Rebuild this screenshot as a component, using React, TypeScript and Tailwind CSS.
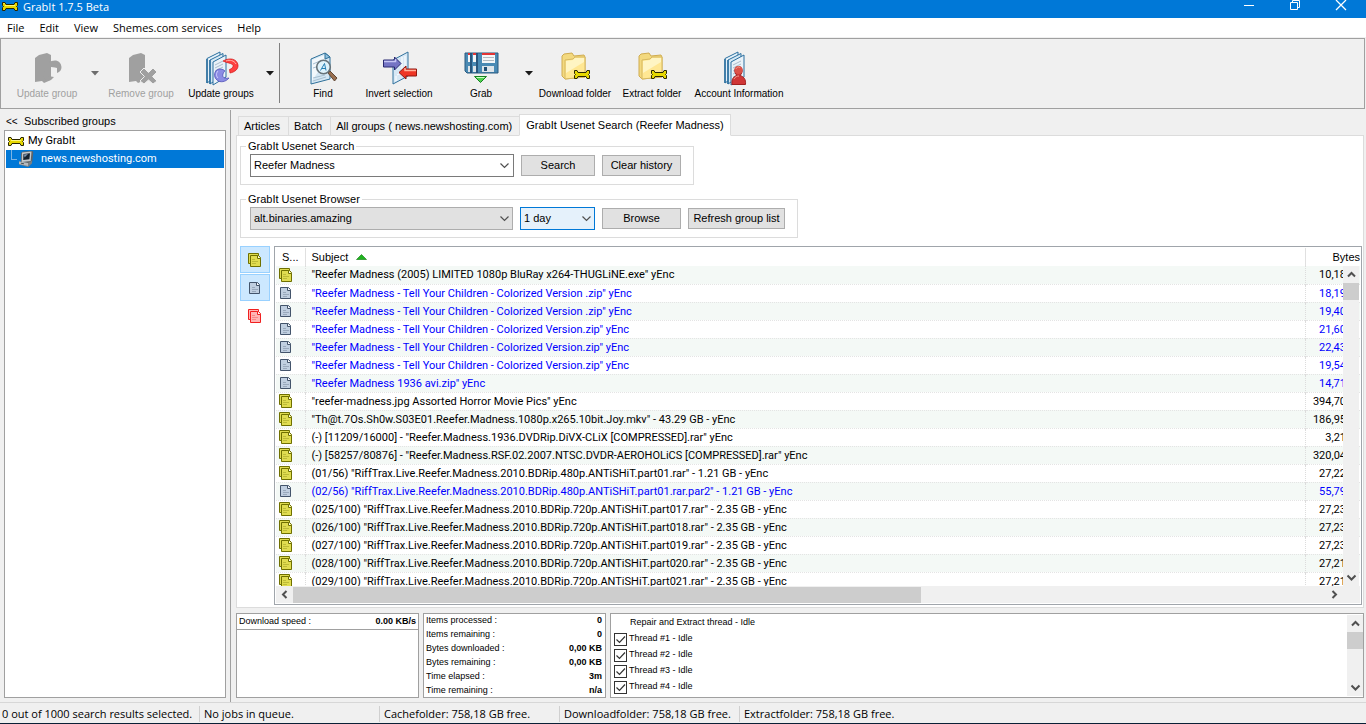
import { useState, type ReactNode } from 'react';

interface Article {
  subject: string;
  bytes: string;
  partial?: boolean;
}

const ARTICLES: Article[] = [
  { subject: '"Reefer Madness (2005) LIMITED 1080p BluRay x264-THUGLiNE.exe" yEnc', bytes: '10,18' },
  { subject: '"Reefer Madness - Tell Your Children - Colorized Version .zip" yEnc', bytes: '18,19', partial: true },
  { subject: '"Reefer Madness - Tell Your Children - Colorized Version .zip" yEnc', bytes: '19,40', partial: true },
  { subject: '"Reefer Madness - Tell Your Children - Colorized Version.zip" yEnc', bytes: '21,60', partial: true },
  { subject: '"Reefer Madness - Tell Your Children - Colorized Version.zip" yEnc', bytes: '22,43', partial: true },
  { subject: '"Reefer Madness - Tell Your Children - Colorized Version.zip" yEnc', bytes: '19,54', partial: true },
  { subject: '"Reefer Madness 1936 avi.zip" yEnc', bytes: '14,71', partial: true },
  { subject: '"reefer-madness.jpg Assorted Horror Movie Pics" yEnc', bytes: '394,70' },
  { subject: '"Th@t.7Os.Sh0w.S03E01.Reefer.Madness.1080p.x265.10bit.Joy.mkv" - 43.29 GB - yEnc', bytes: '186,95' },
  { subject: '(-) [11209/16000] - "Reefer.Madness.1936.DVDRip.DiVX-CLiX [COMPRESSED].rar" yEnc', bytes: '3,21' },
  { subject: '(-) [58257/80876] - "Reefer.Madness.RSF.02.2007.NTSC.DVDR-AEROHOLiCS [COMPRESSED].rar" yEnc', bytes: '320,04' },
  { subject: '(01/56) "RiffTrax.Live.Reefer.Madness.2010.BDRip.480p.ANTiSHiT.part01.rar" - 1.21 GB - yEnc', bytes: '27,22' },
  { subject: '(02/56) "RiffTrax.Live.Reefer.Madness.2010.BDRip.480p.ANTiSHiT.part01.rar.par2" - 1.21 GB - yEnc', bytes: '55,79', partial: true },
  { subject: '(025/100) "RiffTrax.Live.Reefer.Madness.2010.BDRip.720p.ANTiSHiT.part017.rar" - 2.35 GB - yEnc', bytes: '27,23' },
  { subject: '(026/100) "RiffTrax.Live.Reefer.Madness.2010.BDRip.720p.ANTiSHiT.part018.rar" - 2.35 GB - yEnc', bytes: '27,23' },
  { subject: '(027/100) "RiffTrax.Live.Reefer.Madness.2010.BDRip.720p.ANTiSHiT.part019.rar" - 2.35 GB - yEnc', bytes: '27,23' },
  { subject: '(028/100) "RiffTrax.Live.Reefer.Madness.2010.BDRip.720p.ANTiSHiT.part020.rar" - 2.35 GB - yEnc', bytes: '27,21' },
  { subject: '(029/100) "RiffTrax.Live.Reefer.Madness.2010.BDRip.720p.ANTiSHiT.part021.rar" - 2.35 GB - yEnc', bytes: '27,21' },
];

const STATS = [
  ['Items processed :', '0'],
  ['Items remaining :', '0'],
  ['Bytes downloaded :', '0,00 KB'],
  ['Bytes remaining :', '0,00 KB'],
  ['Time elapsed :', '3m'],
  ['Time remaining :', 'n/a'],
];

const THREADS = ['Thread #1 - Idle', 'Thread #2 - Idle', 'Thread #3 - Idle', 'Thread #4 - Idle'];

const TABS = ['Articles', 'Batch', 'All groups ( news.newshosting.com)', 'GrabIt Usenet Search (Reefer Madness)'];

/* ---------- icons ---------- */

const BONE = 'M.5 .5h2.500l1 2h8l1-2h2.500v3l-1 1 1 1v3H13l-1-2H4l-1 2H.5v-3l1-1-1-1z';

function BoneIcon({ className }: { className?: string }) {
  return (
    <svg className={className} width="16" height="9" viewBox="0 0 16 9">
      <path d={BONE} fill="#e8d800" stroke="#2a2600" />
      <path d="M1.500 1.500h1M3 3.500h10" stroke="#fff67a" />
    </svg>
  );
}

function ServerIcon() {
  return (
    <svg width="16" height="16" viewBox="0 0 16 16">
      <path d="M3 2l2-1.500 9.500-.5.8 1.500-1 9L11 13l-8-2z" fill="#5d6368" />
      <path d="M4 1.500l9.500-1-.8 9.500-9 1z" fill="#c3c8cb" />
      <path d="M5.500 3l6.500-.7-.6 6-6.200.7z" fill="#16222f" />
      <path d="M6 3.500l4-.4-3.500 3.400z" fill="#7c96b3" />
      <path d="M1 10.500l9 1.500 4-2.500v3L10 16l-9-2.500z" fill="#777e83" />
      <path d="M1 10.500l9 1.500v3l-9-2z" fill="#b3b9bd" />
      <path d="M3 12.200l3 .6" stroke="#4a5055" />
    </svg>
  );
}

function Stack({ dim }: { dim?: boolean }) {
  if (dim) return <path d="M6 7l4-3 8-2 4 2v25l-7 3-2-2-7 1z" fill="#a0a0a0" />;
  return (
    <g stroke="#2b6f9f" strokeLinejoin="round">
      <path d="M4 7.500L17 1v22L4 32z" fill="#e6f2fa" />
      <path d="M7 9l13-6.500v22L7 33z" fill="#d5e8f4" />
      <path d="M10 11l13-7v22L10 34z" fill="#e9f1f8" />
      <path d="M12 14l8-4M12 17l8-4M12 20l8-4M12 23l6-3M12 26l5-2" stroke="#a9bccb" />
      <path d="M4 8v24M7 9v24" strokeWidth="1.500" />
    </g>
  );
}

function Page() {
  return (
    <g strokeLinejoin="round">
      <path d="M6 8L20 2l5 4v22L6 33z" fill="#d4e7f4" stroke="#2f7099" />
      <path d="M7 9l13-5v6L7 30z" fill="#f2f8fc" />
      <path d="M20 2v6l5-2z" fill="#8fc1df" stroke="#2f7099" />
      <path d="M8 13l7-3M8 17l6-2M8 27l12-3M8 30l13-4" stroke="#a7bfd0" />
    </g>
  );
}

function UpdateGroupsIcon() {
  return (
    <>
      <Stack />
      <path d="M20 10c7-4 14-2 15 4 .5 4-3 7-8 8l-.5-3.500c3-1 4.500-3.500 3-5-2-1.500-5.500-1.500-9.500-3.500z" fill="#ff4040" stroke="#d01414" strokeWidth=".7" />
      <path d="M23 10c4-1.500 8-.5 10 3" stroke="#ffb2a8" fill="none" />
      <path d="M16 18c-5 1-6 8-2 11 3 3 9 2 12-2-5 1-7-1-6-4 .5-2 2-3 2-3-2-2-4-2-6-2z" fill="#8b8ce4" stroke="#4545b0" strokeWidth=".7" />
      <path d="M15 20c-2 2-2 5 0 7" stroke="#d5d4ff" fill="none" />
    </>
  );
}

function FindIcon() {
  return (
    <>
      <Page />
      <path d="M23 22l2-2 7 7-2.500 3z" fill="#9a6f4f" stroke="#5e4634" />
      <circle cx="18.500" cy="16" r="6.800" fill="#dff3fc" stroke="#66737a" strokeWidth="1.600" />
      <path d="M15.500 19.500l4-7 1.500 7M17 17.500h4" stroke="#247fb4" fill="none" />
    </>
  );
}

function InvertIcon() {
  return (
    <>
      <path d="M12 9l15-8v24l-15 8z" fill="#d7e8f5" stroke="#32729d" />
      <path d="M15 25v5M21 6v18M24 5v17M16 24l4-2" stroke="#fff" />
      <path d="M2.500 9h11V6l6.500 6.500-6.500 6.500V16h-11z" fill="#7474c4" stroke="#292970" />
      <path d="M3 10.500h11.500V8" stroke="#c6c6f5" fill="none" strokeWidth="1.500" />
      <path d="M35.500 18H25v-3l-7 6.500 7 6.500v-3h10.500z" fill="#ee3524" stroke="#8e170f" />
      <path d="M35 19.500H24V17" stroke="#ffb39b" fill="none" strokeWidth="1.500" />
    </>
  );
}

function GrabIcon() {
  return (
    <>
      <path d="M2 2h33v20H4l-2-2z" fill="#4a8ab4" stroke="#285a80" />
      <path d="M8 2v20M14 2v20" stroke="#1c466b" strokeWidth="1.500" />
      <path d="M5 2h2v9H5zM10 2h3v9h-3zM19 2h13v10H19z" fill="#f4f6f8" />
      <path d="M5 2h2v2H5zM10 2h3v2h-3zM19 2h13v2H19z" fill="#e33434" />
      <path d="M20 6.500h11M20 9.500h11" stroke="#b3bac0" />
      <path d="M5 15h2v6H5zM10 15h3v6h-3zM19 15h12v6H19z" fill="#dee5ea" />
      <path d="M21 16h3v4h-3z" fill="#214f73" />
      <path d="M11.500 25.500h12l-6 6z" fill="#4fd24f" stroke="#157e20" />
      <path d="M13.500 26.500h8" stroke="#c9ffc4" />
    </>
  );
}

function FolderIcon() {
  return (
    <>
      <path d="M5 5l2-2 8-1 2 3 10-1 1 2v20L8 28l-3-3z" fill="#f3d97f" stroke="#d0ac50" />
      <path d="M8 9l8-1 2-2h10v20L8 28z" fill="#ffe793" stroke="#d6b860" />
      <path d="M9 10l7-1 2-2h9v4L9 22z" fill="#fff5c4" />
      <g transform="translate(17 19)">
        <path d={BONE} fill="#e8d800" stroke="#2a2600" />
      </g>
    </>
  );
}

function AccountIcon() {
  return (
    <>
      <Stack />
      <path d="M11 33.500c-.5-5 1-8 5-9-4-4-2-9 1.500-9s5.500 5 1.500 9c4 1 6 4 5.500 9z" fill="#cf3636" stroke="#a02020" />
      <circle cx="17.500" cy="19" r="4" fill="#dc5148" />
      <path d="M15 18c1-2 3-3 4-1M13 28c1-2 3-3 5-3" stroke="#f49c8e" fill="none" />
    </>
  );
}

function ArticleIcon({ kind }: { kind: 'full' | 'partial' | 'missing' }) {
  const colors = {
    full: ['#e0dc50', '#6f7000'],
    partial: ['#c0cfe0', '#43546b'],
    missing: ['#ffb4b4', '#f02020'],
  };
  const [fill, line] = colors[kind];
  return (
    <svg width="16" height="16" viewBox="0 0 16 16">
      {kind !== 'partial' && <path d="M1.500 1.500h10v10h-10z" fill={fill} stroke={line} />}
      <path d={kind === 'partial' ? 'M2.500 2.500h8l2 2v9h-10z' : 'M3.500 3.500h8l2 2v9h-10z'} fill={fill} stroke={line} />
      <path d={kind === 'partial' ? 'M9.500 2.500v3h3' : 'M10.500 3.500v3h3'} fill="#fff" stroke={line} />
      <path d="M5 7.500h3M5 9.500h6M5 11.500h4" stroke={line} opacity=".3" />
    </svg>
  );
}

function Chevron({ dir = 'down', bold }: { dir?: 'down' | 'up' | 'left' | 'right'; bold?: boolean }) {
  const paths = {
    down: 'M1.500 3.500L5.500 7.500L9.500 3.500',
    up: 'M2 7.500L5.500 4L9 7.500',
    left: 'M7.500 2L4 5.500L7.500 9',
    right: 'M3.500 2L7 5.500L3.500 9',
  };
  return (
    <svg width="11" height="11" viewBox="0 0 11 11" fill="none" stroke="#505050" strokeWidth={bold ? 2 : 1.2}>
      <path d={paths[dir]} />
    </svg>
  );
}

/* ---------- small controls ---------- */

function ToolButton({ label, width, disabled, children }: { label: string; width: string; disabled?: boolean; children: ReactNode }) {
  return (
    <button disabled={disabled} className={`flex flex-col items-center pt-3 text-[10px] leading-[14px] whitespace-nowrap disabled:text-[#a0a0a0] ${width}`}>
      <svg width="36" height="36" viewBox="0 0 36 36">{children}</svg>
      {label}
    </button>
  );
}

function DropArrow({ label, width, dim }: { label: string; width: string; dim?: boolean }) {
  return (
    <button aria-label={label} className={`flex justify-center pt-8 ${width}`}>
      <svg width="8" height="5" viewBox="0 0 8 5">
        <path d="M0 0h8L4 4.500z" fill={dim ? '#6d6d6d' : '#1a1a1a'} />
      </svg>
    </button>
  );
}

function PushButton({ width, children }: { width: string; children: ReactNode }) {
  return (
    <button className={`h-[21px] border border-[#adadad] bg-[#e1e1e1] leading-none whitespace-nowrap ${width}`}>{children}</button>
  );
}

function Combo({ label, options, width, look }: { label: string; options: string[]; width: string; look: string }) {
  return (
    <div className={`relative ${width}`}>
      <select aria-label={label} className={`h-[23px] w-full appearance-none border pr-5 pl-[3px] outline-none ${look}`}>
        {options.map((o) => (
          <option key={o}>{o}</option>
        ))}
      </select>
      <span className="pointer-events-none absolute top-[6px] right-[3px]">
        <Chevron />
      </span>
    </div>
  );
}

function Group({ title, children }: { title: string; children: ReactNode }) {
  return (
    <fieldset className="w-fit border border-[#dcdcdc] pr-3 pb-[7px] pl-[9px]">
      <legend className="-ml-1 px-[2px] leading-4">{title}</legend>
      <div className="flex items-center gap-[7px]">{children}</div>
    </fieldset>
  );
}

function VScroll({ className }: { className: string }) {
  return (
    <div className={`flex w-4 flex-col items-center bg-[#f0f0f0] ${className}`}>
      <button aria-label="Scroll up" className="flex h-[17px] items-center"><Chevron dir="up" bold /></button>
      <div className="h-[17px] w-full bg-[#cdcdcd]" />
      <button aria-label="Scroll down" className="mt-auto flex h-[17px] items-center"><Chevron bold /></button>
    </div>
  );
}

/* ---------- sections ---------- */

function TitleBar() {
  return (
    <header className="flex h-[18px] shrink-0 items-start bg-[#0078d7] text-white">
      <BoneIcon className="mt-[2px] ml-[2px]" />
      <h1 className="ml-[5px] leading-[14px]">GrabIt 1.7.5 Beta</h1>
      <div className="ml-auto flex gap-[34px] pr-[19px]">
        <button aria-label="Minimize">
          <svg width="12" height="11" viewBox="0 0 12 11"><path d="M1 5.500h10" stroke="#fff" /></svg>
        </button>
        <button aria-label="Restore">
          <svg width="12" height="11" viewBox="0 0 12 11" fill="none" stroke="#fff">
            <path d="M1.500 2.500h7v7h-7zM3.500 2.500v-2h7v7h-2" />
          </svg>
        </button>
        <button aria-label="Close">
          <svg width="12" height="11" viewBox="0 0 12 11"><path d="M1 0l10 10M11 0L1 10" stroke="#fff" strokeWidth="1.300" /></svg>
        </button>
      </div>
    </header>
  );
}

function Toolbar() {
  return (
    <div className="mr-px flex h-[71px] shrink-0 items-start overflow-hidden border border-[#a0a0a0] pl-1">
      <ToolButton label="Update group" width="w-[84px]" disabled>
        <Stack dim />
        <path d="M19 12c7-5 13-2 13.500 4 0 3-1.500 5-4.500 6v-5c-3-1-5-1-8-1zM16 20c-3 5-1 10 6 9l3-3-6-1z" fill="#a0a0a0" />
      </ToolButton>
      <DropArrow label="Update group options" width="w-3" dim />
      <ToolButton label="Remove group" width="w-20" disabled>
        <Stack dim />
        <path d="M17 21l4-4 4.500 4.500L30 17l4 4-4.500 4.500L34 30l-4 3-4.500-4-4.500 4-4-3 4.500-4.500z" fill="#a0a0a0" stroke="#f0f0f0" />
      </ToolButton>
      <ToolButton label="Update groups" width="w-20"><UpdateGroupsIcon /></ToolButton>
      <DropArrow label="Update groups options" width="w-[18px]" />
      <div className="mt-1 h-[60px] w-px bg-[#808080]" />
      <ToolButton label="Find" width="w-[86px]"><FindIcon /></ToolButton>
      <ToolButton label="Invert selection" width="w-[66px]"><InvertIcon /></ToolButton>
      <div className="w-2" />
      <ToolButton label="Grab" width="w-[82px]"><GrabIcon /></ToolButton>
      <DropArrow label="Grab options" width="w-[14px]" />
      <ToolButton label="Download folder" width="w-[78px]"><FolderIcon /></ToolButton>
      <ToolButton label="Extract folder" width="w-[76px]"><FolderIcon /></ToolButton>
      <ToolButton label="Account Information" width="w-[98px]"><AccountIcon /></ToolButton>
    </div>
  );
}

function Sidebar() {
  return (
    <aside className="flex w-[231px] shrink-0 flex-col border-r border-[#a0a0a0] pr-1 pb-1 pl-1">
      <div className="flex h-5 items-center pt-[2px] pl-[2px]">
        <button aria-label="Collapse panel" className="w-[18px] text-left text-[10px]">&lt;&lt;</button>
        <h2>Subscribed groups</h2>
      </div>
      <ul className="flex-1 border border-[#a0a0a0] bg-white p-px font-[Roboto,sans-serif]">
        <li className="flex h-[18px] items-center gap-1 pl-[2px]">
          <BoneIcon />
          My GrabIt
        </li>
        <li className="flex h-[18px] items-center bg-[#0078d7] pl-[5px] text-white">
          <span className="-mt-2 h-[10px] w-[6px] border-b border-l border-[#7cb4e4]" />
          <span className="mr-[7px] ml-px"><ServerIcon /></span>
          news.newshosting.com
        </li>
      </ul>
    </aside>
  );
}

function ResultList() {
  return (
    <div className="flex min-w-0 flex-1 flex-col border border-[#a0a5ab] p-px">
      <div className="relative min-h-0 flex-1 overflow-hidden">
        <table className="w-full table-fixed border-collapse">
          <thead>
            <tr className="h-[18px] text-left">
              <th className="w-[29px] border-r border-[#e0e0e0] p-0 pl-[6px] font-normal">S...</th>
              <th className="border-r border-[#e0e0e0] p-0 pl-[6px] font-normal">
                <span className="flex items-center gap-2">
                  Subject
                  <svg width="11" height="6" viewBox="0 0 11 6"><path d="M.5 5.500l5-5 5 5z" fill="#1fb31f" stroke="#0c760c" strokeWidth=".6" /></svg>
                </span>
              </th>
              <th className="w-[55px] p-0 text-right font-normal">Bytes</th>
            </tr>
          </thead>
          <tbody className="font-[Roboto,sans-serif]">
            {ARTICLES.map((a, i) => (
              <tr key={i} className={`h-[18px] border-b border-dotted border-[#e4e4e4] odd:bg-[#f4f9f6] ${a.partial ? 'text-[#0000ff]' : 'text-black'}`}>
                <td className="border-r border-dotted border-[#dcdcdc] p-0 pl-[2px]">
                  <ArticleIcon kind={a.partial ? 'partial' : 'full'} />
                </td>
                <td className="border-r border-dotted border-[#dcdcdc] p-0 pl-[6px] leading-[17px] whitespace-nowrap">{a.subject}</td>
                <td className="p-0 pr-[14px] text-right leading-[17px]">{a.bytes}</td>
              </tr>
            ))}
          </tbody>
        </table>
        <VScroll className="absolute top-[18px] right-px bottom-0" />
      </div>
      <div className="flex h-[17px] shrink-0 items-center bg-[#f0f0f0] pr-5">
        <button aria-label="Scroll left" className="flex w-[17px] justify-center"><Chevron dir="left" bold /></button>
        <div className="h-4 w-[59%] bg-[#cdcdcd]" />
        <button aria-label="Scroll right" className="ml-auto"><Chevron dir="right" bold /></button>
      </div>
    </div>
  );
}

function SearchPanel() {
  const [term, setTerm] = useState('Reefer Madness');
  return (
    <div className="flex min-h-0 flex-1 flex-col border border-[#dcdcdc] bg-white pt-[2px] pr-px pb-[2px] pl-[3px]">
      <Group title="GrabIt Usenet Search">
        <div className="flex h-[23px] w-[264px] items-center border border-[#7a7a7a] bg-white pr-[3px]">
          <input aria-label="Search term" value={term} onChange={(e) => setTerm(e.target.value)} className="min-w-0 flex-1 pl-[3px] outline-none" />
          <button aria-label="Search history"><Chevron /></button>
        </div>
        <PushButton width="w-[74px]">Search</PushButton>
        <PushButton width="w-[79px]">Clear history</PushButton>
      </Group>
      <div className="mt-[6px]">
        <Group title="GrabIt Usenet Browser">
          <Combo label="Group" options={['alt.binaries.amazing']} width="w-[263px]" look="border-[#adadad] bg-[#e1e1e1]" />
          <Combo label="Age" options={['1 day', '7 days', '30 days']} width="w-[75px]" look="border-[#0078d7] bg-[#e5f1fb]" />
          <PushButton width="w-[79px]">Browse</PushButton>
          <PushButton width="w-[97px]">Refresh group list</PushButton>
        </Group>
      </div>
      <div className="mt-2 flex min-h-0 flex-1 gap-1">
        <div className="flex w-[30px] shrink-0 flex-col gap-px">
          <button aria-label="Show complete articles" className="flex h-[27px] items-center justify-center border border-[#99d1ff] bg-[#cce8ff]"><ArticleIcon kind="full" /></button>
          <button aria-label="Show incomplete articles" className="flex h-[27px] items-center justify-center border border-[#99d1ff] bg-[#cce8ff]"><ArticleIcon kind="partial" /></button>
          <button aria-label="Show missing articles" className="flex h-[27px] items-center justify-center"><ArticleIcon kind="missing" /></button>
        </div>
        <ResultList />
      </div>
    </div>
  );
}

function StatusPanels() {
  return (
    <div className="flex h-[85px] shrink-0 gap-1 text-[9px]">
      <section className="w-[183px] border border-[#a0a0a0] bg-white">
        <div className="flex h-4 items-center justify-between border-b border-[#a0a0a0] px-[2px]">
          <span>Download speed :</span>
          <b>0.00 KB/s</b>
        </div>
      </section>
      <section className="w-[183px] border border-[#a0a0a0] bg-white pr-[3px] pl-[2px]">
        <dl>
          {STATS.map(([name, value]) => (
            <div key={name} className="flex h-[14px] items-center justify-between">
              <dt>{name}</dt>
              <dd className="font-bold">{value}</dd>
            </div>
          ))}
        </dl>
      </section>
      <section className="flex flex-1 border border-[#a0a0a0] bg-white">
        <div className="flex-1 pt-px pl-[3px]">
          <p className="flex h-4 items-center pl-4">Repair and Extract thread - Idle</p>
          {THREADS.map((t) => (
            <label key={t} className="flex h-4 items-center gap-[2px]">
              <span className="relative flex">
                <input type="checkbox" defaultChecked className="peer h-[13px] w-[13px] appearance-none border border-[#333] bg-white" />
                <svg className="pointer-events-none absolute inset-0 hidden peer-checked:block" width="13" height="13" viewBox="0 0 13 13">
                  <path d="M2.500 6.500l3 3 5.500-6" fill="none" stroke="#333" strokeWidth="1.200" />
                </svg>
              </span>
              {t}
            </label>
          ))}
        </div>
        <VScroll className="my-px" />
      </section>
    </div>
  );
}

function StatusBar() {
  return (
    <footer className="flex h-[22px] shrink-0 items-center border-t border-b border-t-[#d7d7d7] border-b-[#0a2036] pt-[2px] font-['Open_Sans',sans-serif] whitespace-nowrap">
      <span className="w-[200px] border-r border-[#d0d0d0] pl-[2px]">0 out of 1000 search results selected.</span>
      <span className="w-[180px] border-r border-[#d0d0d0] pl-1">No jobs in queue.</span>
      <span className="w-[180px] border-r border-[#d0d0d0] pl-1">Cachefolder: 758,18 GB free.</span>
      <span className="w-[180px] border-r border-[#d0d0d0] pl-1">Downloadfolder: 758,18 GB free.</span>
      <span className="pl-1">Extractfolder: 758,18 GB free.</span>
    </footer>
  );
}

export default function App() {
  const [tab, setTab] = useState(3);

  return (
    <div className="flex h-screen flex-col overflow-hidden bg-[#f0f0f0] font-['Liberation_Sans',Arial,sans-serif] text-[11px] text-black">
      <div className="font-['Open_Sans',sans-serif]">
        <TitleBar />
        <nav className="mb-px flex h-[19px] items-center gap-[15px] bg-white pt-px pl-[7px]">
          {['File', 'Edit', 'View', 'Shemes.com services', 'Help'].map((item) => (
            <button key={item}>{item}</button>
          ))}
        </nav>
      </div>
      <Toolbar />
      <div className="mt-px flex min-h-0 flex-1">
        <Sidebar />
        <main className="flex min-w-0 flex-1 flex-col pt-1 pr-[2px] pb-1 pl-[5px]">
          <div role="tablist" className="z-10 -mb-px flex items-end pl-[2px]">
            {TABS.map((t, i) => (
              <button
                key={t}
                role="tab"
                aria-selected={tab === i}
                onClick={() => setTab(i)}
                className={`border border-[#dcdcdc] whitespace-nowrap ${
                  tab === i ? '-ml-px h-[22px] border-b-white bg-white px-[6px]' : '-mr-px h-5 bg-[#f0f0f0] pr-2 pl-[5px]'
                }`}
              >
                {t}
              </button>
            ))}
          </div>
          <SearchPanel />
          <div className="h-[5px] shrink-0" />
          <StatusPanels />
        </main>
      </div>
      <StatusBar />
    </div>
  );
}
